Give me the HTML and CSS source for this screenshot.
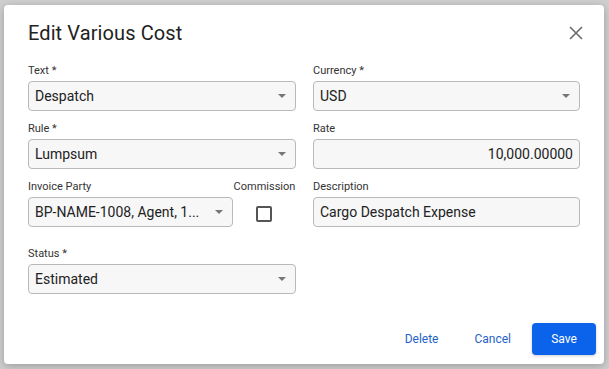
FILE: index.html
```html
<!DOCTYPE html>
<html lang="en">

<head>
    <meta charset="UTF-8">
    <meta name="viewport" content="width=device-width, initial-scale=1.0">
    <title>Edit Various Cost</title>
    <link rel="stylesheet" href="styles.css">
</head>

<body>
    <div class="dialog">
        <div class="dialog-head">
            <h1 class="dialog-title">Edit Various Cost</h1>
            <button class="close-btn" aria-label="Close">
                <svg width="14" height="14" viewBox="0 0 14 14">
                    <path d="M1 1 L13 13 M13 1 L1 13" stroke="#6b6b6b" stroke-width="1.6" fill="none" />
                </svg>
            </button>
        </div>

        <div class="form-grid">
            <div class="field">
                <label>Text *</label>
                <div class="select">Despatch<span class="caret"></span></div>
            </div>
            <div class="field">
                <label>Currency *</label>
                <div class="select">USD<span class="caret"></span></div>
            </div>

            <div class="field">
                <label>Rule *</label>
                <div class="select">Lumpsum<span class="caret"></span></div>
            </div>
            <div class="field">
                <label>Rate</label>
                <div class="input number">10,000.00000</div>
            </div>

            <div class="field-pair">
                <div class="field party">
                    <label>Invoice Party</label>
                    <div class="select"><span>BP-NAME-1008, Agent, 1...</span><span class="caret"></span></div>
                </div>
                <div class="field commission">
                    <label>Commission</label>
                    <div class="check-wrap"><span class="checkbox"></span></div>
                </div>
            </div>
            <div class="field">
                <label>Description</label>
                <div class="input">Cargo Despatch Expense</div>
            </div>

            <div class="field status">
                <label>Status *</label>
                <div class="select">Estimated<span class="caret"></span></div>
            </div>
        </div>

        <div class="actions">
            <button class="text-btn">Delete</button>
            <button class="text-btn">Cancel</button>
            <button class="primary-btn">Save</button>
        </div>
    </div>
</body>

</html>
```

FILE: styles.css
```css
:root {
    --primary-color: #0a63ea;
    --link-color: #1f63c9;
    --text-color: #222;
    --label-color: #333;
    --field-bg: #f7f7f7;
    --field-border: #b9b9b9;
}

* {
    margin: 0;
    padding: 0;
    box-sizing: border-box;
    font-family: Roboto, 'Liberation Sans', sans-serif;
}

body {
    width: 609px;
    height: 369px;
    background: #cfcfcf;
    padding: 5px 5px 5px 4px;
}

.dialog {
    width: 600px;
    height: 359px;
    background: #fff;
    border-radius: 4px;
    box-shadow: 0 2px 8px rgba(0, 0, 0, 0.25);
    padding: 14px 24px 0 24px;
    display: flex;
    flex-direction: column;
}

.dialog-head {
    display: flex;
    align-items: center;
    justify-content: space-between;
    height: 28px;
}

.dialog-title {
    font-size: 20px;
    font-weight: 400;
    color: var(--text-color);
    letter-spacing: 0.1px;
}

.close-btn {
    border: none;
    background: none;
    width: 14px;
    height: 14px;
    margin-right: -3px;
    display: flex;
    cursor: pointer;
}

.form-grid {
    display: grid;
    grid-template-columns: 268px 267px;
    column-gap: 17px;
    row-gap: 11px;
    margin-top: 17px;
}

.field label {
    display: block;
    font-size: 11px;
    line-height: 13px;
    color: var(--label-color);
    margin-bottom: 4px;
}

.select,
.input {
    height: 30px;
    border: 1px solid var(--field-border);
    border-radius: 4px;
    background: var(--field-bg);
    display: flex;
    align-items: center;
    padding: 0 8px 0 6px;
    font-size: 14px;
    color: var(--text-color);
}

.select {
    justify-content: space-between;
}

.input.number {
    justify-content: flex-end;
    padding-right: 6px;
}

.caret {
    width: 0;
    height: 0;
    border-left: 4.5px solid transparent;
    border-right: 4.5px solid transparent;
    border-top: 4.5px solid #777;
    margin-right: 1px;
}

.field-pair {
    display: flex;
}

.field.party {
    width: 205px;
}

.field.commission {
    flex: 1;
    text-align: center;
}

.check-wrap {
    height: 30px;
    display: flex;
    align-items: center;
    justify-content: center;
}

.checkbox {
    width: 16px;
    height: 16px;
    border: 2px solid #555;
    border-radius: 2px;
    margin-top: 4px;
    margin-left: -1px;
}

.field.status {
    margin-top: 9px;
}

.actions {
    margin-top: auto;
    height: 41px;
    margin-right: -16px;
    display: flex;
    align-items: flex-start;
    justify-content: flex-end;
}

.text-btn {
    border: none;
    background: none;
    color: var(--link-color);
    font-size: 12px;
    padding: 0 18px;
    height: 32px;
    cursor: pointer;
}

.primary-btn {
    border: none;
    border-radius: 4px;
    background: var(--primary-color);
    color: #fff;
    font-size: 12px;
    width: 64px;
    height: 32px;
    margin-left: 3px;
    box-shadow: 0 1px 3px rgba(0, 0, 0, 0.2);
    cursor: pointer;
}
```
